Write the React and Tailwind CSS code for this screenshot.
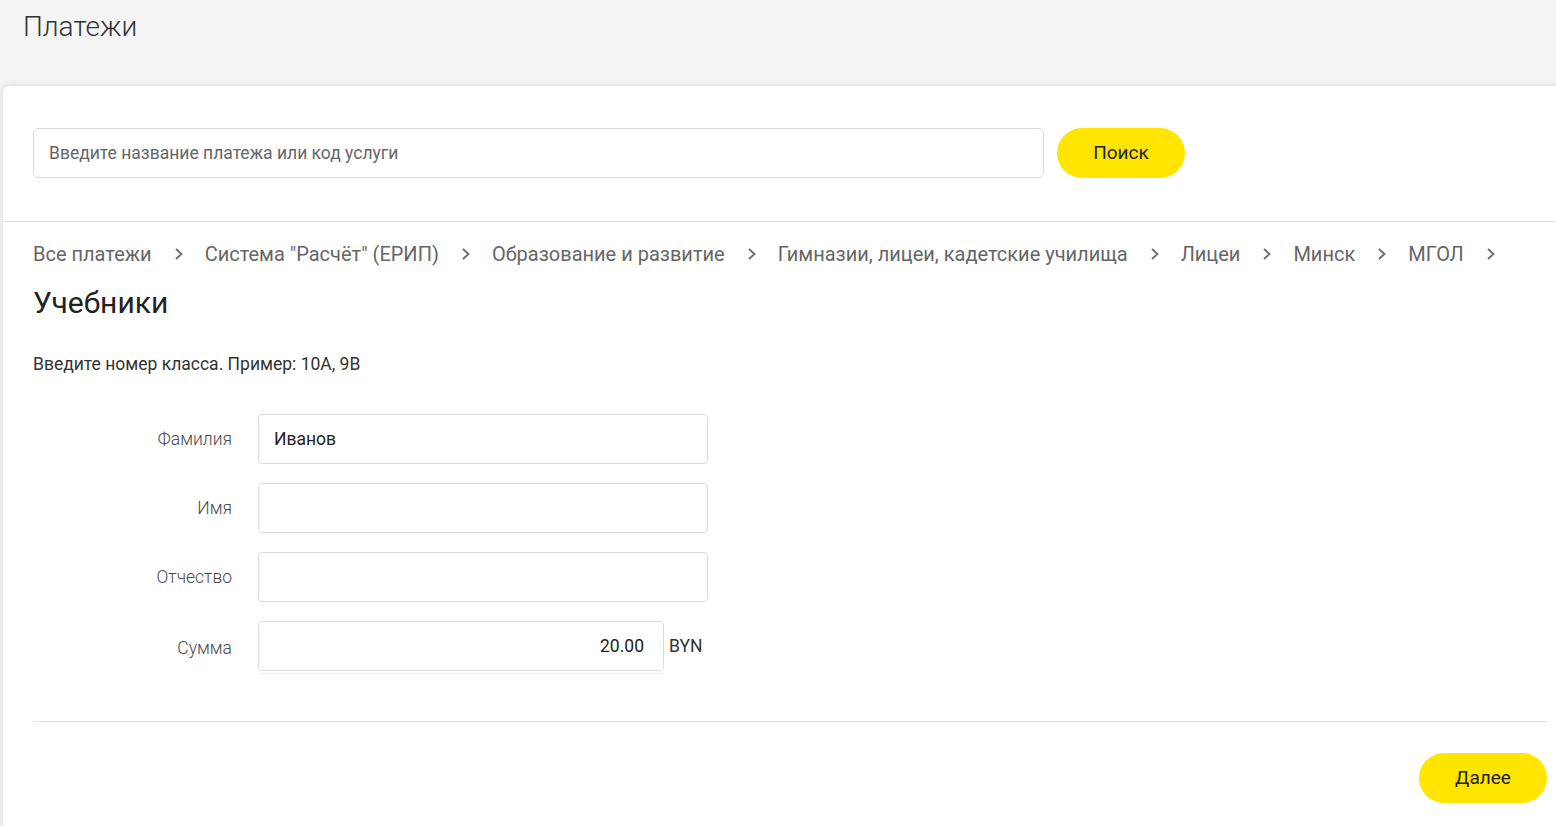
import React from "react";

const crumbs = [
  "Все платежи",
  'Система "Расчёт" (ЕРИП)',
  "Образование и развитие",
  "Гимназии, лицеи, кадетские училища",
  "Лицеи",
  "Минск",
  "МГОЛ",
];

function Chevron() {
  return (
    <svg width="10" height="16" viewBox="0 0 10 16" className="ml-[22px] mr-[21px] shrink-0">
      <path d="M2 3l5.5 5L2 13" fill="none" stroke="#6b6b6b" strokeWidth="1.8" />
    </svg>
  );
}

function Field({ label, value = "", narrow }) {
  return (
    <div className="flex items-center">
      <label className="w-[199px] text-right text-[17.5px] font-light text-[#4a4a4a]">{label}</label>
      <div className="ml-[26px] flex items-center">
        {narrow ? (
          <>
            <div className="flex flex-col">
              <input
                readOnly
                value={value}
                className="h-[50px] w-[406px] rounded-[4px] border border-[#dcdcdc] px-[19px] text-right text-[17.5px] text-[#222] outline-none"
              />
              <div className="mx-[2px] mt-[2px] h-px bg-[#eeeeee]" />
            </div>
            <span className="ml-[5px] mb-[3px] text-[17.5px] text-[#333]">BYN</span>
          </>
        ) : (
          <input
            readOnly
            value={value}
            className="h-[50px] w-[450px] rounded-[4px] border border-[#dcdcdc] px-[15px] text-[17.5px] text-[#222] outline-none"
          />
        )}
      </div>
    </div>
  );
}

export default function App() {
  return (
    <div
      className="h-[826px] w-full overflow-hidden bg-[#f5f5f5]"
      style={{ fontFamily: "Roboto, 'Noto Sans', sans-serif" }}
    >
      <h1 className="px-[23px] pt-[8px] text-[28px] font-light leading-[38px] text-[#333]">Платежи</h1>

      <div className="ml-[3px] mt-[40px] w-[1574px] rounded-tl-[6px] bg-white pb-[60px] shadow-[0_0_8px_rgba(0,0,0,0.12)]">
        {/* Search */}
        <div className="flex items-center gap-[13px] px-[30px] pt-[42px] pb-[43px]">
          <input
            placeholder="Введите название платежа или код услуги"
            className="h-[50px] w-[1011px] rounded-[5px] border border-[#dcdcdc] px-[15px] text-[17.5px] text-[#222] placeholder:text-[#666] outline-none"
          />
          <button className="h-[50px] w-[128px] rounded-full bg-[#ffe500] text-[19px] text-[#222]">Поиск</button>
        </div>

        <div className="h-px bg-[#e2e2e2]" />

        <div className="px-[30px]">
          {/* Breadcrumbs */}
          <div className="flex items-center pt-[19px] text-[20px] leading-[26px] text-[#666]">
            {crumbs.map((c) => (
              <React.Fragment key={c}>
                <span className="whitespace-nowrap">{c}</span>
                <Chevron />
              </React.Fragment>
            ))}
          </div>

          <h2 className="mt-[17px] text-[30px] leading-[38px] text-[#222]">Учебники</h2>

          <p className="mt-[29px] text-[17.5px] text-[#333]">Введите номер класса. Пример: 10А, 9В</p>

          <div className="mt-[37px] flex flex-col gap-[19px]">
            <Field label="Фамилия" value="Иванов" />
            <Field label="Имя" />
            <Field label="Отчество" />
            <Field label="Сумма" value="20.00" narrow />
          </div>

          <div className="mt-[47px] h-px w-[1514px] bg-[#e2e2e2]" />

          <div className="flex w-[1514px] justify-end pt-[31px]">
            <button className="h-[50px] w-[128px] rounded-full bg-[#ffe500] text-[19px] text-[#222]">Далее</button>
          </div>
        </div>
      </div>
    </div>
  );
}
